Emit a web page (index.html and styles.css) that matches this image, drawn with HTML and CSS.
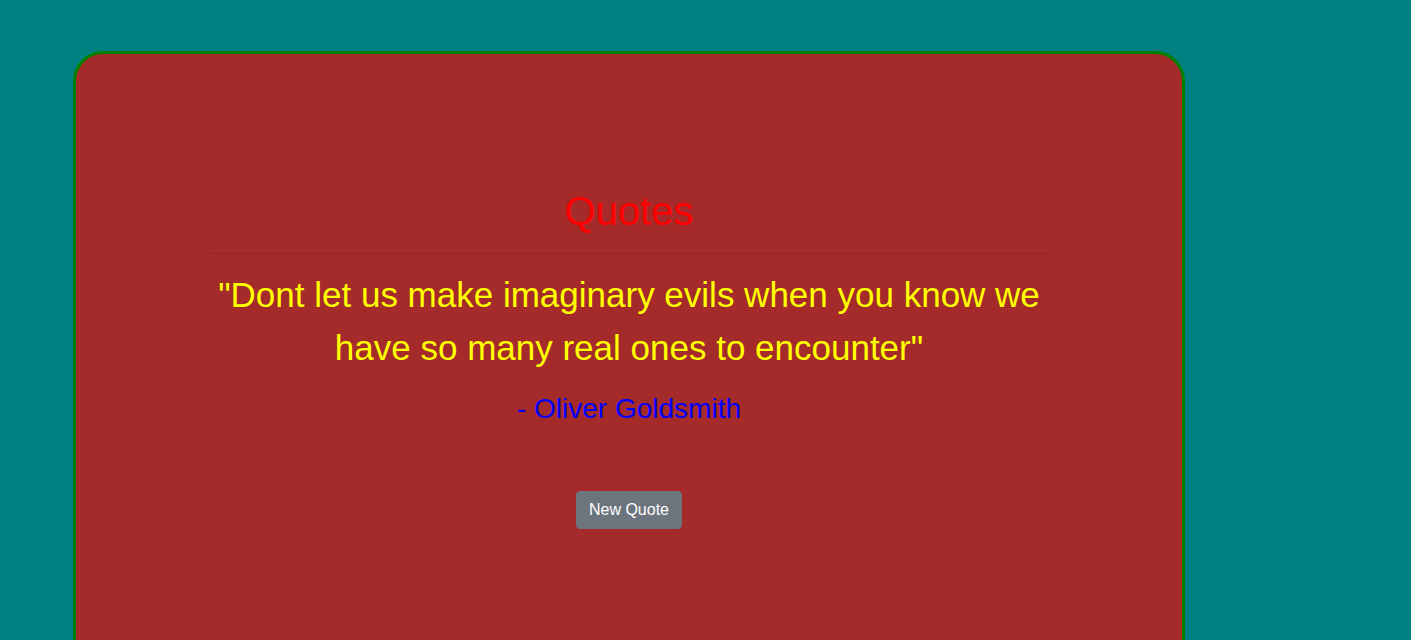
FILE: index.html
```html
<!DOCTYPE html>
<html lang="en">
<head>
<meta charset="utf-8">
<title>Quotes</title>
<link rel="stylesheet" href="styles.css">
</head>
<body>
<main class="card">
  <section class="quote-box">
    <h1 class="title">Quotes</h1>
    <hr class="divider">
    <p class="quote-text">"Dont let us make imaginary evils when you know we have so many real ones to encounter"</p>
    <p class="quote-author">- Oliver Goldsmith</p>
    <button class="btn-new" type="button">New Quote</button>
  </section>
</main>
</body>
</html>
```
FILE: styles.css
```css
html, body {
  margin: 0;
  padding: 0;
}
body {
  background: #008080;
  font-family: "Liberation Sans", Arial, sans-serif;
  height: 640px;
  overflow: hidden;
  padding-top: 51px;
  padding-left: 73px;
  box-sizing: border-box;
}
.card {
  box-sizing: border-box;
  width: 1112px;
  height: 700px;
  background: #a52a2a;
  border: 3px solid #008000;
  border-radius: 30px;
  padding-top: 133px;
  display: flex;
  justify-content: center;
}
.quote-box {
  width: 838px;
  display: flex;
  flex-direction: column;
  align-items: center;
  text-align: center;
}
.title {
  margin: 0;
  font-size: 40px;
  font-weight: 400;
  line-height: 1.2;
  color: #ff0000;
}
.divider {
  width: 100%;
  margin: 18px 0 15px;
  border: 0;
  border-top: 1px solid rgba(0, 0, 0, 0.1);
}
.quote-text {
  margin: 0;
  font-size: 35px;
  line-height: 52.5px;
  color: #ffff00;
}
.quote-author {
  margin: 14px 0 0;
  font-size: 28px;
  line-height: 42px;
  color: #0000ff;
}
.btn-new {
  margin-top: 61px;
  font-family: "Liberation Sans", Arial, sans-serif;
  font-size: 16px;
  line-height: 24px;
  padding: 6px 12px;
  color: #fff;
  background: #6c757d;
  border: 1px solid #6c757d;
  border-radius: 4px;
  box-sizing: border-box;
  height: 38px;
}
```
